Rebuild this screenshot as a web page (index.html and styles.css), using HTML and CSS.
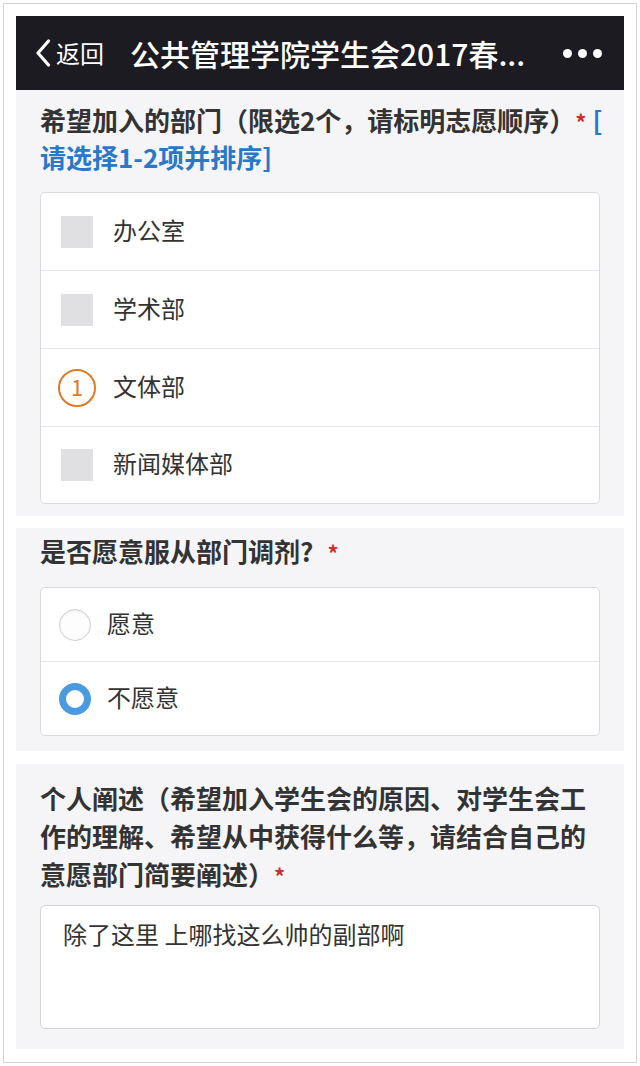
FILE: index.html
```html
<!DOCTYPE html>
<html lang="zh-CN">
<head>
<meta charset="utf-8">
<title>公共管理学院学生会2017春</title>
<link rel="stylesheet" href="styles.css">
</head>
<body>
<div class="frame">
  <div class="screen">
    <header class="nav">
      <div class="back">
        <svg class="chev" width="16" height="28" viewBox="0 0 16 28"><path d="M13.5 2 L3 14 L13.5 26" fill="none" stroke="#fff" stroke-width="3.2" stroke-linecap="round" stroke-linejoin="round"/></svg>
        <span class="back-text">返回</span>
      </div>
      <div class="nav-title">公共管理学院学生会2017春...</div>
      <div class="more"><i></i><i></i><i></i></div>
    </header>

    <section class="q q1">
      <div class="q-title"><span class="nowrap">希望加入的部门（限选2个，请标明志愿顺序）<span class="req">*</span> <span class="hint">[</span></span><br><span class="hint">请选择1-2项并排序]</span></div>
      <div class="options">
        <div class="opt tall"><span class="check"></span><span class="label">办公室</span></div>
        <div class="opt tall"><span class="check"></span><span class="label">学术部</span></div>
        <div class="opt tall"><span class="rank"><span class="rank-num">1</span></span><span class="label">文体部</span></div>
        <div class="opt tall"><span class="check"></span><span class="label">新闻媒体部</span></div>
      </div>
    </section>

    <section class="q q2">
      <div class="q-title">是否愿意服从部门调剂?<span class="req req-gap">*</span></div>
      <div class="options">
        <div class="opt radio-row"><span class="radio"></span><span class="label">愿意</span></div>
        <div class="opt radio-row"><span class="radio on"></span><span class="label">不愿意</span></div>
      </div>
    </section>

    <section class="q q3">
      <div class="q-title lh38">个人阐述（希望加入学生会的原因、对学生会工<br>作的理解、希望从中获得什么等，请结合自己的<br>意愿部门简要阐述）<span class="req">*</span></div>
      <div class="textarea">除了这里 上哪找这么帅的副部啊</div>
    </section>
  </div>
</div>
</body>
</html>
```

FILE: styles.css
```css
* { box-sizing: border-box; }
html, body { margin: 0; padding: 0; background: #fff; }
body {
  font-family: "Noto Sans CJK SC", "Noto Sans", sans-serif;
  color: #333;
}
.frame {
  margin: 3px;
  height: 1060px;
  border: 1px solid #d4d4d4;
  padding: 12px 11px 0 12px;
}
.screen {
  width: 608px;
}
.nav {
  height: 74px;
  background: #1c1b21;
  display: flex;
  align-items: center;
  color: #fff;
  padding: 0 0 0 19px;
}
.back {
  display: flex;
  align-items: center;
  gap: 5px;
}
.chev { display: block; }
.back-text {
  font-size: 24px;
  line-height: 1;
  color: #fff;
}
.nav-title {
  margin-left: 26px;
  font-size: 30px;
  font-weight: 500;
  line-height: 1;
  white-space: nowrap;
  flex: 1;
}
.more {
  display: flex;
  gap: 6px;
  padding-right: 22px;
}
.more i {
  width: 9px;
  height: 9px;
  border-radius: 50%;
  background: #fff;
  display: block;
}
.q {
  background: #f5f5f7;
  padding: 0 24px;
}
.q-title {
  font-size: 26px;
  font-weight: 700;
  line-height: 36px;
  color: #333;
}
.lh38 { line-height: 38px; }
.nowrap { white-space: nowrap; }
.req { color: #cf2f2f; font-size: 22px; }
.req-gap { margin-left: 14px; }
.hint { color: #2a78c8; }
.q1 { padding-top: 12px; padding-bottom: 12px; }
.q2 { margin-top: 12px; padding-top: 5px; padding-bottom: 15px; }
.q3 { margin-top: 13px; padding-top: 15px; padding-bottom: 20px; }
.q1 .options { margin-top: 17px; }
.q2 .options { margin-top: 17px; }
.options {
  background: #fff;
  border: 1px solid #d9d9dc;
  border-radius: 5px;
}
.opt {
  display: flex;
  align-items: center;
  border-top: 1px solid #e6e6e8;
}
.opt:first-child { border-top: none; }
.opt.tall { height: 78px; padding-left: 20px; }
.opt.tall:first-child { height: 77px; }
.opt.tall:last-child { height: 77px; }
.radio-row { height: 74px; padding-left: 18px; }
.radio-row:first-child { height: 73px; }
.label {
  font-size: 24px;
  line-height: 1;
  color: #333;
  position: relative;
  top: -2px;
}
.check {
  width: 32px;
  height: 32px;
  background: #e0e0e3;
  margin-right: 20px;
  flex: none;
}
.rank {
  width: 38px;
  height: 38px;
  margin-left: -3px;
  margin-right: 17px;
  border: 2.5px solid #e07a22;
  border-radius: 50%;
  color: #e07a22;
  font-size: 22px;
  line-height: 1;
  display: flex;
  align-items: center;
  justify-content: center;
  flex: none;
}
.rank-num {
  position: relative;
  top: -2px;
}
.radio {
  width: 32px;
  height: 32px;
  border-radius: 50%;
  border: 1px solid #cfcfcf;
  background: #fdfdfd;
  box-shadow: inset 0 1px 2px rgba(0,0,0,0.08);
  margin-right: 16px;
  flex: none;
}
.radio.on {
  border: 7px solid #4a9ae0;
  background: #fff;
  box-shadow: none;
}
.textarea {
  margin-top: 11px;
  height: 124px;
  background: #fff;
  border: 1px solid #d4d4d6;
  border-radius: 5px;
  padding: 14px 22px;
  font-size: 24px;
  line-height: 1.2;
  color: #333;
}
```
